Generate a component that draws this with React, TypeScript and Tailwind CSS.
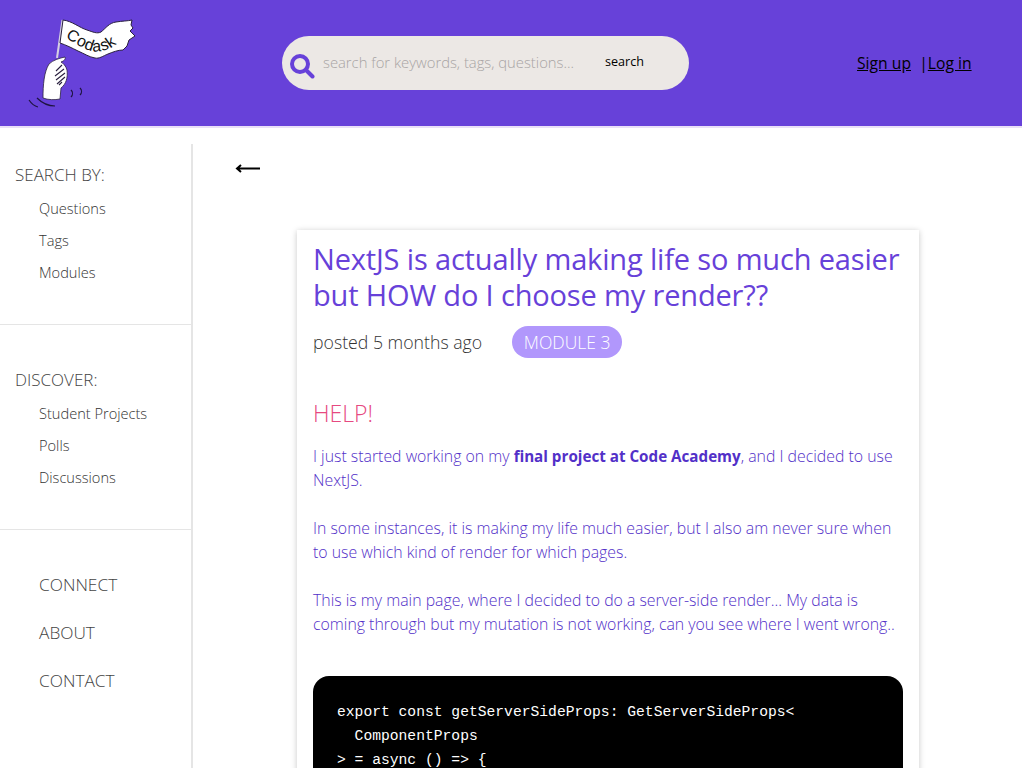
const sans = { fontFamily: '"Open Sans", sans-serif' };

function Logo() {
  return (
    <svg width="112" height="100" viewBox="27 12 112 100" className="shrink-0">
      <path d="M62.5 20 L57 58" stroke="#d5d0e2" strokeWidth="2" fill="none" />
      <path
        d="M63 20 C72 21 80 28 87 30 C93 32 97 34 101 32 C106 28 109 23 116 22 C122 21 128 21 132 20 L131 25 L133 28 L130 31 L135 36 L129 40 L127 46 L123 50 C118 50 113 52 108 54 C103 56 99 59 95 58 C89 57 85 54 78 51 C72 48 66 45 60 43 Z"
        fill="white"
        stroke="#2b2140"
        strokeWidth="1"
      />
      <path id="codask-curve" d="M65 37 C80 47 90 53 100 51 C108 50 115 47 122 38" fill="none" />
      <text fontSize="16" fontFamily="Liberation Sans, sans-serif" fill="#111" letterSpacing="0.6">
        <textPath href="#codask-curve">Codask</textPath>
      </text>
      <path
        d="M65 57 C60 58 53 60 49 64 C44 72 43 85 43 98 C48 100 55 100 60 99 L61 88 C66 84 68 78 67 70 C66 66 63 63 61 62 C64 61 66 59 65 57 Z"
        fill="white"
        stroke="#2b2140"
        strokeWidth="0.8"
      />
      <path
        d="M62 65 L56 71 M64 69 L55 76 M65 73 L56 80 M65 77 L57 84 M62 82 L59 85"
        stroke="#2b2140"
        strokeWidth="1.1"
        fill="none"
      />
      <path
        d="M29 100 C31 103 34 106 38 107 M37 98 C42 103 48 106 55 106 M71 90 C73 92 73 95 71 97 M80 88 C82 90 82 93 80 95"
        stroke="#1e1440"
        strokeWidth="1.2"
        fill="none"
      />
    </svg>
  );
}

function SearchBar() {
  return (
    <div className="flex h-[54px] w-[407px] items-center rounded-[27px] bg-[#ece8e5]">
      <svg width="26" height="26" viewBox="0 0 26 26" className="ml-[7px] mt-[5px] shrink-0">
        <circle cx="11" cy="11" r="8" fill="none" stroke="#6741d9" strokeWidth="4" />
        <path d="M17 17 L23.5 23.5" stroke="#6741d9" strokeWidth="4" strokeLinecap="round" />
      </svg>
      <span className="ml-[8px] mt-[-2px] w-[282px] text-[14.8px] font-light text-[#a8a4a4]">
        search for keywords, tags, questions...
      </span>
      <span className="mt-[-2px] text-[12.6px] text-black">search</span>
    </div>
  );
}

function Header() {
  return (
    <header className="flex h-[128px] items-center border-b-2 border-[#e9e0f7] bg-[#6741d9]">
      <div className="ml-[27px] self-start mt-[12px]">
        <Logo />
      </div>
      <div className="ml-[143px]">
        <SearchBar />
      </div>
      <div className="ml-[168px] mt-[2px] whitespace-pre text-[15.7px] text-black">
        <span className="underline">Sign up</span>
        <span>{"  |"}</span>
        <span className="underline">Log in</span>
      </div>
    </header>
  );
}

function SideGroup({ title, items }: { title: string; items: string[] }) {
  return (
    <div className="border-b border-[#e5e5e5] pb-[36px]">
      <h3 className="pl-[15px] text-[17px] font-light leading-[24px] text-[#444]">{title}</h3>
      <ul className="mt-[5px]">
        {items.map((item) => (
          <li key={item} className="pl-[39px] text-[14.6px] font-light leading-[32px] text-[#333]">
            {item}
          </li>
        ))}
      </ul>
    </div>
  );
}

function Sidebar() {
  return (
    <aside className="mt-[16px] w-[193px] shrink-0 border-r-2 border-[#e5e5e5] pt-[19px]">
      <SideGroup title="SEARCH BY:" items={["Questions", "Tags", "Modules"]} />
      <div className="pt-[43px]">
        <SideGroup title="DISCOVER:" items={["Student Projects", "Polls", "Discussions"]} />
      </div>
      <ul className="pt-[31px]">
        {["CONNECT", "ABOUT", "CONTACT"].map((link) => (
          <li key={link} className="pl-[39px] text-[17.3px] font-light leading-[48px] text-[#444]">
            {link}
          </li>
        ))}
      </ul>
    </aside>
  );
}

function Question() {
  return (
    <article className="ml-[104px] mt-[52px] w-[622px] bg-white px-[16px] pt-[11px] shadow-[0_1px_6px_rgba(0,0,0,0.22)]">
      <h1 className="text-[29px] leading-[36px] tracking-[-0.16px] text-[#6741d9]">
        NextJS is actually making life so much easier but HOW do I choose my render??
      </h1>
      <div className="mt-[13px] flex items-center">
        <span className="text-[17.7px] font-light text-[#333]">posted 5 months ago</span>
        <span className="ml-[30px] flex h-[32px] w-[110px] items-center justify-center rounded-full bg-[#b197fc] text-[17.5px] font-light text-white">
          MODULE 3
        </span>
      </div>
      <h2 className="mt-[39px] text-[23px] font-light leading-[32px] text-[#e64980]">HELP!</h2>
      <div className="mt-[15px] text-[15.85px] font-light leading-[24px] text-[#5230c8]">
        <p>
          I just started working on my <strong className="text-[15.2px] font-bold">final project at Code Academy</strong>, and I
          decided to use NextJS.
        </p>
        <p className="mt-[24px]">
          In some instances, it is making my life much easier, but I also am never sure when to use which kind of
          render for which pages.
        </p>
        <p className="mt-[24px]">
          This is my main page, where I decided to do a server-side render... My data is coming through but my mutation
          is not working, can you see where I went wrong..
        </p>
      </div>
      <pre className="mt-[40px] rounded-t-[16px] bg-black px-[24px] pt-[24px] pb-[40px] font-['Liberation_Mono',monospace] text-[14.67px] leading-[24px] text-white">
        {"export const getServerSideProps: GetServerSideProps<\n  ComponentProps\n> = async () => {"}
      </pre>
    </article>
  );
}

export default function App() {
  return (
    <div className="flex h-screen flex-col overflow-hidden bg-white" style={sans}>
      <Header />
      <div className="flex min-h-0 flex-1">
        <Sidebar />
        <main className="min-w-0 flex-1">
          <div className="pl-[40px] pt-[30px]">
            <svg width="30" height="20" className="block" viewBox="0 0 30 20">
              <path d="M4 10.5 H27 M8 7 L4 10.5 L8 14" stroke="black" strokeWidth="2" fill="none" />
            </svg>
          </div>
          <Question />
        </main>
      </div>
    </div>
  );
}
